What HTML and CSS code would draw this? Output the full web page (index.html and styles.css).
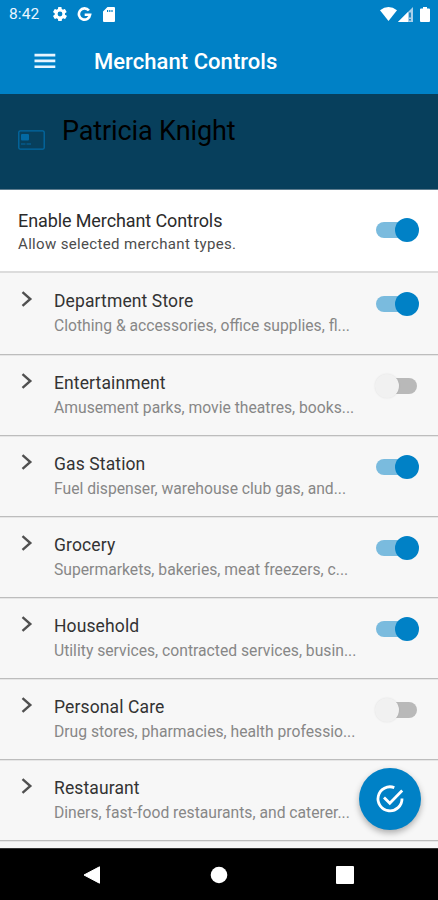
FILE: index.html
```html
<!DOCTYPE html>
<html lang="en">
<head>
<meta charset="utf-8">
<meta name="viewport" content="width=device-width, initial-scale=1">
<title>Merchant Controls</title>
<link rel="stylesheet" href="styles.css">
</head>
<body>
<div class="screen">
  <header class="top">
    <div class="status">
      <span class="time">8:42</span>
      <svg class="st-gear" viewBox="0 0 24 24"><path fill="#fff" fill-rule="evenodd" d="M19.4 13c0-.3.1-.6.1-1s0-.7-.1-1l2.3-1.700c.2-.2.3-.5.1-.7l-2.200-3.800c-.1-.2-.4-.3-.6-.2l-2.700 1c-.5-.4-1.100-.8-1.700-1l-.4-2.800c0-.3-.2-.4-.5-.4H9.800c-.3 0-.4.100-.5.400l-.4 2.800c-.6.200-1.200.6-1.700 1l-2.700-1c-.2-.1-.5 0-.6.200L1.700 8.600c-.1.200-.1.500.1.700L4.100 11c0 .3-.1.700-.1 1s0 .7.100 1l-2.300 1.700c-.2.200-.2.500-.1.700l2.200 3.800c.1.200.4.300.6.200l2.700-1c.5.400 1.100.8 1.700 1l.4 2.800c.1.300.2.400.5.400h4.300c.3 0 .5-.1.500-.4l.4-2.800c.6-.2 1.200-.6 1.700-1l2.700 1c.2.100.5 0 .6-.2l2.200-3.800c.1-.2.1-.5-.1-.7zM12 15.600a3.600 3.600 0 1 1 0-7.200 3.600 3.600 0 0 1 0 7.200z"/></svg>
      <svg class="st-g" viewBox="0 0 16 16"><path fill="none" stroke="#fff" stroke-width="2.800" d="M12.700 3.700A6 6 0 1 0 14 8.200H8.200"/></svg>
      <svg class="st-sd" viewBox="0 0 12 15"><path fill="#fff" fill-rule="evenodd" d="M4.500 0H11a1 1 0 0 1 1 1v13a1 1 0 0 1-1 1H1a1 1 0 0 1-1-1V4.500zM4 3v2h1.200V3zm2.200 0v2h1.200V3zm2.200 0v2h1.200V3z"/></svg>
      <svg class="st-wifi" viewBox="0 0 17 14"><path fill="#fff" d="M0 3.300Q8.500-3.300 17 3.300L8.500 14z"/></svg>
      <svg class="st-cell" viewBox="0 0 15 15"><path fill="#a9d0ea" d="M15 0v15H0z"/><path fill="#fff" d="M10 5v10H0z"/><path fill="#0879b8" d="M11.200 5.500h1.600v5h-1.600zm0 6.500h1.600v1.600h-1.600z"/></svg>
      <svg class="st-bat" viewBox="0 0 10 15"><path fill="#fff" d="M3 0h4v1.500h2q1 0 1 1V14q0 1-1 1H1q-1 0-1-1V2.500q0-1 1-1h2z"/></svg>
    </div>
    <div class="bar">
      <svg class="menu" viewBox="0 0 22 16"><path fill="#e8f5ff" d="M.5.8h20.800v2.600H.5zm0 5.800h20.800v2.600H.5zm0 5.800h20.800V15H.5z"/></svg>
      <h1 class="title">Merchant Controls</h1>
    </div>
  </header>
  <section class="person">
    <svg class="card" viewBox="0 0 27 20"><rect x=".8" y=".8" width="25.400" height="18.400" rx="1.500" fill="none" stroke="#0369a3" stroke-width="1.300"/><rect x="3" y="4" width="8" height="6.500" rx="1" fill="#0369a3"/><path stroke="#0369a3" stroke-width="1.200" stroke-dasharray="4.500 1" d="M3 14h11"/></svg>
    <h2 class="name">Patricia Knight</h2>
  </section>
  <section class="enable">
    <div class="enable-text">
      <div class="enable-title">Enable Merchant Controls</div>
      <div class="enable-sub">Allow selected merchant types.</div>
    </div>
    <span class="switch on"></span>
  </section>
  <main class="list">
    <div class="row"><svg class="chev" viewBox="0 0 12 16"><path d="M1.500 1.200 9.300 8l-7.800 6.800"/></svg><div class="text"><div class="t">Department Store</div><div class="s">Clothing &amp; accessories, office supplies, fl...</div></div><span class="switch on"></span></div>
    <div class="row"><svg class="chev" viewBox="0 0 12 16"><path d="M1.500 1.200 9.300 8l-7.800 6.800"/></svg><div class="text"><div class="t">Entertainment</div><div class="s">Amusement parks, movie theatres, books...</div></div><span class="switch"></span></div>
    <div class="row"><svg class="chev" viewBox="0 0 12 16"><path d="M1.500 1.200 9.300 8l-7.800 6.800"/></svg><div class="text"><div class="t">Gas Station</div><div class="s">Fuel dispenser, warehouse club gas, and...</div></div><span class="switch on"></span></div>
    <div class="row"><svg class="chev" viewBox="0 0 12 16"><path d="M1.500 1.200 9.300 8l-7.800 6.800"/></svg><div class="text"><div class="t">Grocery</div><div class="s">Supermarkets, bakeries, meat freezers, c...</div></div><span class="switch on"></span></div>
    <div class="row"><svg class="chev" viewBox="0 0 12 16"><path d="M1.500 1.200 9.300 8l-7.800 6.800"/></svg><div class="text"><div class="t">Household</div><div class="s">Utility services, contracted services, busin...</div></div><span class="switch on"></span></div>
    <div class="row"><svg class="chev" viewBox="0 0 12 16"><path d="M1.500 1.200 9.300 8l-7.800 6.800"/></svg><div class="text"><div class="t">Personal Care</div><div class="s">Drug stores, pharmacies, health professio...</div></div><span class="switch"></span></div>
    <div class="row"><svg class="chev" viewBox="0 0 12 16"><path d="M1.500 1.200 9.300 8l-7.800 6.800"/></svg><div class="text"><div class="t">Restaurant</div><div class="s">Diners, fast-food restaurants, and caterer...</div></div></div>
  </main>
  <nav class="nav">
    <svg viewBox="0 0 18 18"><path fill="#fff" stroke="#fff" stroke-linejoin="round" d="M1 9 16.500.8v16.400z"/></svg>
    <svg viewBox="0 0 18 18"><circle cx="9" cy="9" r="8.300" fill="#fff"/></svg>
    <svg viewBox="0 0 18 18"><rect width="18" height="18" rx="1" fill="#fff"/></svg>
  </nav>
  <button class="fab" aria-label="Save"><svg viewBox="0 0 30 30" fill="none" stroke="#fff" stroke-width="2.800"><path d="M19.300 3.600A12 12 0 1 0 27 14.500"/><path d="m9 13.500 5.800 5.800L27.200 6.600"/></svg></button>
</div>
</body>
</html>
```

FILE: styles.css
```css
* { box-sizing: border-box; }
body { margin: 0; font-family: Roboto, sans-serif; background: #f7f7f7; }
.screen { position: relative; width: 438px; height: 900px; overflow: hidden; display: flex; flex-direction: column; }
svg { display: block; flex: none; }
h1, h2 { margin: 0; font-weight: 400; }
.top { height: 94px; background: #0081c6; color: #fff; }
.status { height: 28px; display: flex; align-items: center; padding: 0 8px 0 9px; }
.time { width: 43px; font-size: 15.5px; line-height: 28px; letter-spacing: .1px; color: #eaf6ff; }
.st-gear { width: 16px; height: 16px; }
.st-g { width: 15px; height: 15px; margin-left: 9px; }
.st-sd { width: 12px; height: 15px; margin-left: 11px; }
.st-wifi { width: 17px; height: 14px; margin-left: auto; }
.st-cell { width: 15px; height: 15px; margin-left: 1px; }
.st-bat { width: 10px; height: 15px; margin: 0 0 0 7px; }
.bar { height: 66px; display: flex; align-items: center; padding: 0 0 1px 34px; }
.menu { width: 22px; height: 16px; }
.title { margin-left: 38px; padding-top: 2px; font-size: 22px; font-weight: 500; line-height: 28px; letter-spacing: .05px; white-space: nowrap; }
.person { height: 96px; background: #073f5c; border-bottom: 1px solid #5e7c8e; display: flex; align-items: flex-start; padding: 21px 0 0 18px; }
.card { width: 27px; height: 20px; margin-top: 15px; }
.name { margin-left: 17px; font-size: 27px; line-height: 32px; letter-spacing: -.12px; color: #000; white-space: nowrap; }
.enable { height: 81px; background: #fff; display: flex; justify-content: space-between; padding: 19px 19px 0 18px; }
.enable-title { font-size: 18px; line-height: 24px; letter-spacing: -.1px; color: #2b2b2b; white-space: nowrap; }
.enable-sub { font-size: 15px; line-height: 22px; letter-spacing: .34px; color: #4c4c4c; white-space: nowrap; }
.list { height: 577px; overflow: hidden; background: #f7f7f7; border-top: 2px solid #dcdcdc; }
.row { height: 81px; border-bottom: 1px solid #bdbdbd; box-shadow: 0 1px 0 #e6e6e6; display: flex; padding: 0 19px 0 21px; }
.row:first-child { height: 82px; }
.chev { width: 12px; height: 16px; margin-top: 18px; fill: none; stroke: #505050; stroke-width: 2.400; }
.text { flex: 1; margin: 15px 0 0 21px; white-space: nowrap; }
.t { font-size: 17.500px; line-height: 26px; letter-spacing: .12px; color: #333; }
.s { font-size: 15.690px; line-height: 24px; color: #878787; }
.switch { position: relative; flex: none; width: 44px; height: 24px; }
.enable .switch { margin-top: 9px; }
.row .switch { margin-top: 19px; }
.switch::before { content: ""; position: absolute; left: 1px; top: 4px; width: 41px; height: 16px; border-radius: 8px; background: #b9b9b9; }
.switch::after { content: ""; position: absolute; left: 0; top: 0; width: 24px; height: 24px; border-radius: 50%; background: #f1f1f1; box-shadow: 0 0 2px rgba(0,0,0,.1); }
.switch.on::before { background: #7abbde; }
.switch.on::after { left: 20px; background: #0081c6; box-shadow: none; }
.nav { height: 52px; background: #000; display: flex; justify-content: space-between; align-items: center; padding: 0 84px 0 83px; border-top: 1px solid #333; }
.nav svg { width: 18px; height: 18px; }
.fab { position: absolute; left: 359px; top: 768px; width: 62px; height: 62px; padding: 0; border: 0; border-radius: 50%; background: #0081c6; box-shadow: 0 3px 6px rgba(0,0,0,.3); display: flex; align-items: center; justify-content: center; }
.fab svg { width: 30px; height: 30px; }
```
